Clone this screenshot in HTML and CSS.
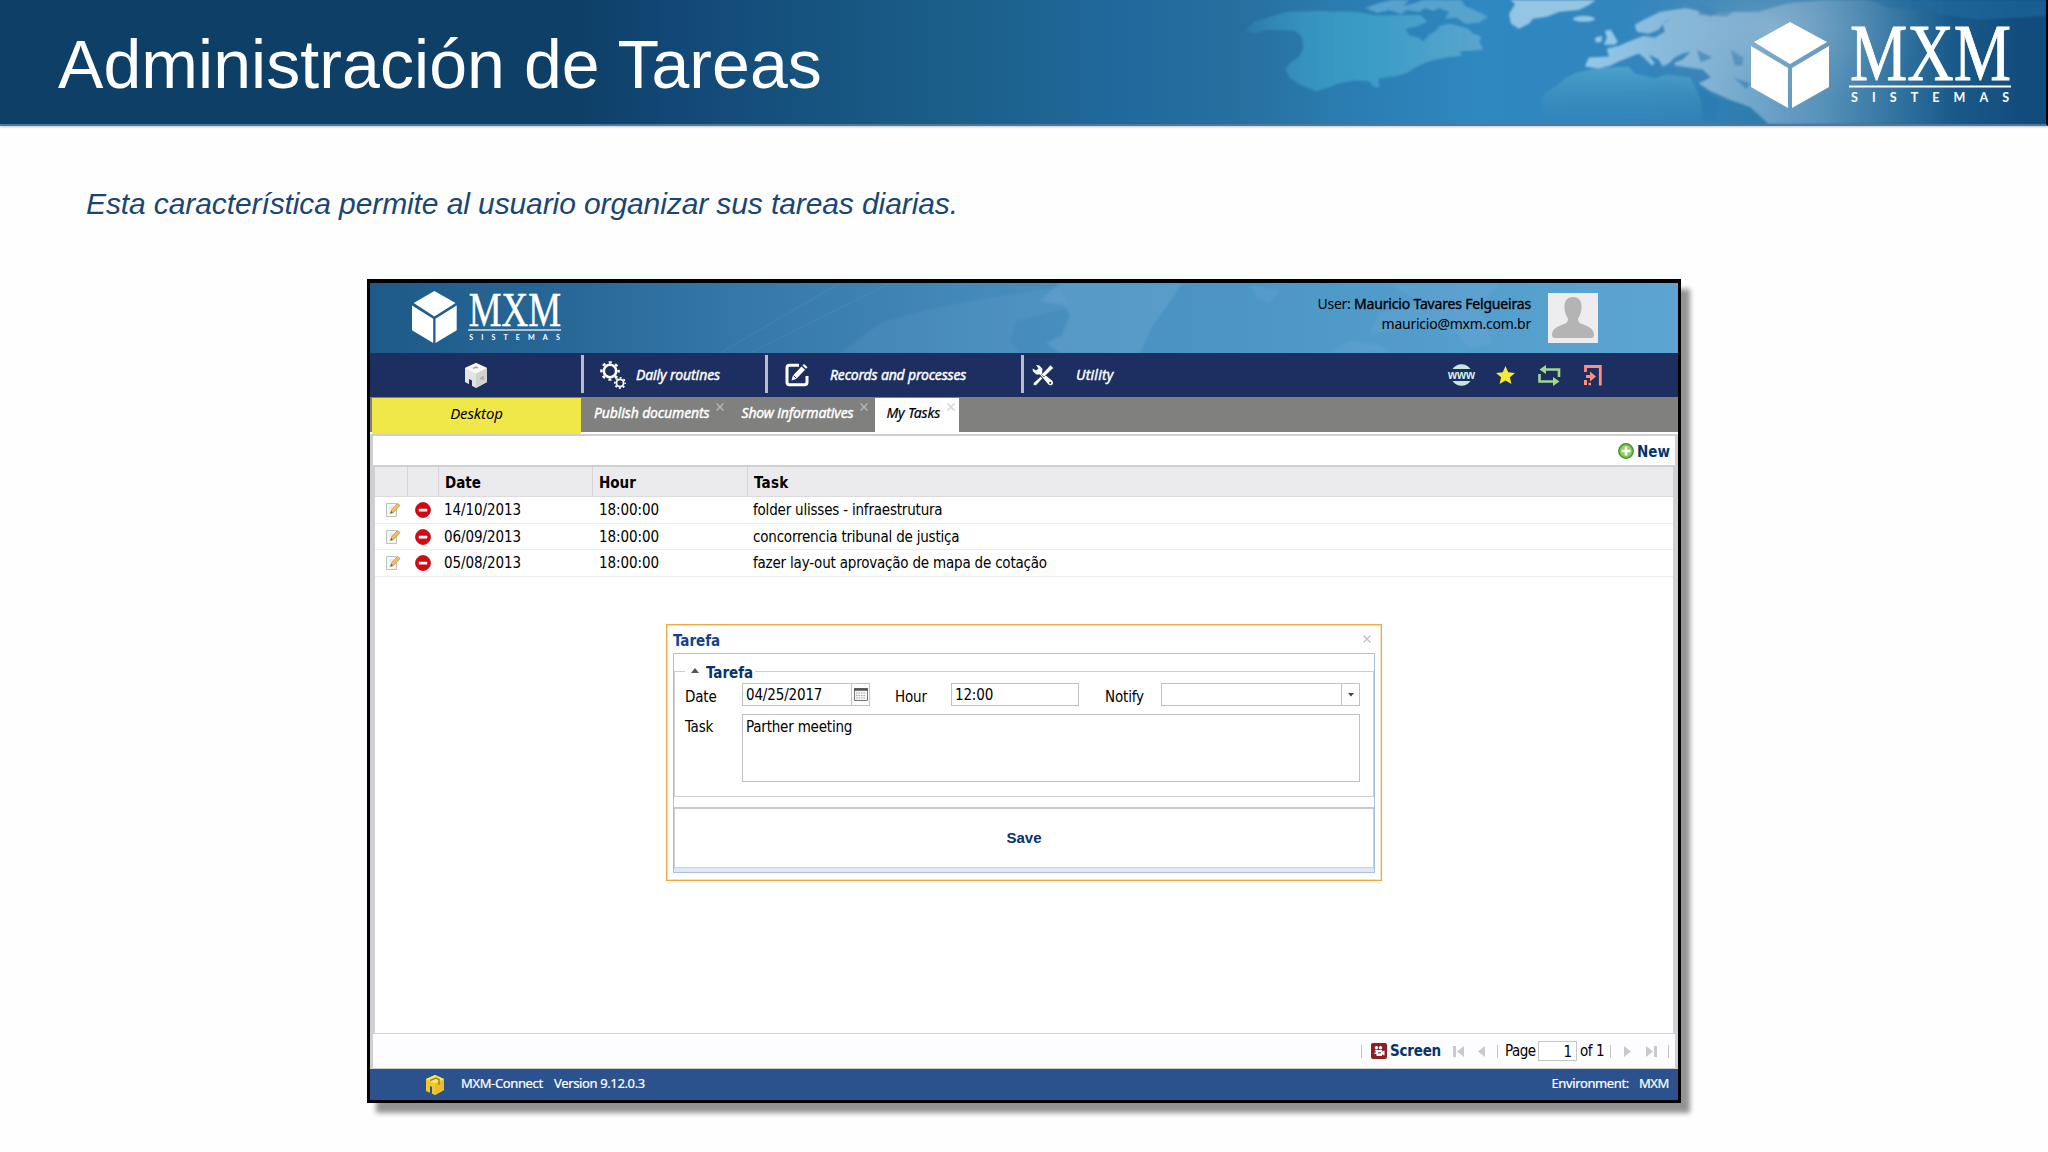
FILE: index.html
```
<!DOCTYPE html>
<html lang="es">
<head>
    <meta charset="UTF-8">
    <meta name="viewport" content="width=device-width, initial-scale=1.0">
    <title>Administración de Tareas</title>
    <link rel="stylesheet" href="styles.css">
</head>
<body>
    <!-- Shared symbols -->
    <svg width="0" height="0" class="defs">
        <symbol id="edit" viewBox="0 0 16 16">
            <path d="M1.5 1.5h10v13h-10z" fill="#f6f8f8" stroke="#b9c1c2"/>
            <path d="M4 5h5M4 7h4M4 11h5" stroke="#dce1e2"/>
            <path d="M5.5 11.5 6.5 8 12.5 1.5 15 3.5 9 10z" fill="#f3c05c" stroke="#b98a3c" stroke-width=".7"/>
            <path d="M5.5 11.5 6.2 9 7.8 10.5z" fill="#555"/>
        </symbol>
        <symbol id="remove" viewBox="0 0 16 16">
            <circle cx="8" cy="8" r="7.5" fill="#d40a10" stroke="#b01318" stroke-width=".8"/>
            <rect x="3.8" y="6.7" width="8.4" height="2.8" rx=".5" fill="#fff"/>
        </symbol>
        <symbol id="close" viewBox="0 0 8 8">
            <path d="M.5.5l7 7M7.5.5l-7 7" fill="none" stroke="currentColor" stroke-width="1.5"/>
        </symbol>
    </svg>

    <header class="slide-header">
        <svg class="map" viewBox="0 0 1048 125" preserveAspectRatio="none">
            <defs>
                <linearGradient id="fade" x1="0" x2="1"><stop offset="0" stop-color="#3a9cc6" stop-opacity=".1"/><stop offset=".3" stop-color="#3a9cc6" stop-opacity=".55"/><stop offset=".6" stop-color="#3f9fc8" stop-opacity=".8"/><stop offset="1" stop-color="#5aa5cf"/></linearGradient>
                <linearGradient id="low" x1="0" x2="0" y1="0" y2="1"><stop offset=".5" stop-color="#2878ad" stop-opacity="0"/><stop offset="1" stop-color="#2878ad" stop-opacity=".8"/></linearGradient>
                <linearGradient id="europe" x1="0" x2="1"><stop offset="0" stop-color="#93c8e8"/><stop offset=".25" stop-color="#8dbcdc" stop-opacity=".9"/><stop offset=".5" stop-color="#7aa8c8" stop-opacity=".6"/><stop offset=".8" stop-color="#5c94b8" stop-opacity="0"/></linearGradient>
                <linearGradient id="africa" x1="0" x2="0" y1="0" y2="1"><stop offset="0" stop-color="#4ba3cb"/><stop offset="1" stop-color="#3583b4" stop-opacity=".2"/></linearGradient>
                <radialGradient id="glow"><stop offset="0" stop-color="#a9c3d8" stop-opacity=".45"/><stop offset="1" stop-color="#7fa9c8" stop-opacity="0"/></radialGradient>
                <filter id="soft" x="-5%" y="-5%" width="110%" height="110%"><feGaussianBlur stdDeviation=".9"/></filter>
            </defs>
            <g filter="url(#soft)">
                <path id="america" fill="url(#fade)" d="M245 31 255 22 268 18 286 12 320 11 357 12 379 16 400 15 421 15 428 22 416 27 406 29 410 36 420 38 424 42 430 35 437 31 441 26 451 24 469 29 474 34 482 37 480 42 484 50 472 51 460 52 463 56 445 58 429 62 418 67 406 74 394 77 379 79 380 88 375 88 370 82 355 81 339 84 330 88 317 92 300 85 290 78 286 70 290 64 300 57 304 48 302 36 295 31 268 30 256 33z"/>
                <use href="#america" fill="url(#low)"/>
                <path fill="#57a3cd" d="M366 8 380 3 392 0H410L404 6 416 3 424 0H462L466 6 480 12 489 17 480 23 466 24 458 18 446 19 450 12 440 8 434 11 426 8 420 12 408 10 402 14 390 10 378 13z"/>
                <path fill="#94c5e4" d="M511 0 516 4 510 14 512 24 520 29 530 24 534 19 548 17 560 12 580 10 590 5 597 0z"/>
                <ellipse cx="585" cy="19" rx="11" ry="3" fill="#94c5e4"/>
                <path fill="#93c8e8" d="M606 31 612 30 615 35 619 42 616 45 605 45 608 38zM596 38 603 36 603 42 597 43z"/>
                <path fill="url(#europe)" d="M638 32 636 25 645 20 661 12 687 8 700 11 712 17 720 12 760 12 790 3 830 0H1048V125H770L752 108 730 100 712 92 700 84 712 78 704 70 690 68 676 66 676 63 684 60 692 52 684 54 676 58 670 64 664 67 660 60 650 55 656 64 653 66 645 58 640 54 630 58 620 62 612 66 600 69 586 67 590 58 610 57 608 49 620 46 632 41 645 36 656 38 666 32 664 24 674 18 666 22 660 30 650 34z"/>
                <path fill="url(#africa)" d="M542 105 546 94 558 86 566 79 578 73 592 70 610 68 630 67 636 74 656 79 668 75 692 78 700 96 716 125H546z"/>
                <path fill="#2a7bb0" opacity=".7" d="M700 4 735 12 728 17 700 15zM698 50 714 58 702 63zM732 50 745 58 744 66 736 66zM735 78 752 84 748 90zM700 88 720 100 716 122H704zM868 41 878 36 876 39z"/>
                <path fill="#1f6a9f" opacity=".6" d="M870 0H1048V16L980 20 930 12 890 8z"/>
            </g>
            <ellipse cx="775" cy="28" rx="150" ry="80" fill="url(#glow)"/>
        </svg>
        <h1>Administración de Tareas</h1>
        <svg class="brand" viewBox="0 0 260 86" preserveAspectRatio="none" fill="#fff">
            <path d="M39 0 76 20 39 42 3 20zM0 24 37 46V86L0 65zM78 24 41 46V86L78 65z"/>
            <text class="mark" x="99" y="58" textLength="161" lengthAdjust="spacingAndGlyphs">MXM</text>
            <rect x="98" y="63.5" width="162" height="2"/>
            <text class="sub" x="100" y="80" textLength="158">SISTEMAS</text>
        </svg>
    </header>

    <p class="intro">Esta característica permite al usuario organizar sus tareas diarias.</p>

    <div class="app">
        <div class="banner">
            <svg class="banner-map" viewBox="0 0 1308 70" preserveAspectRatio="none">
                <g fill="#7db4dc" filter="url(#soft)">
                    <path opacity=".13" d="M470 70 510 40 560 26 600 18 650 10 690 4 700 24 646 38 640 58 650 70z"/>
                    <path opacity=".28" d="M690 0H812L798 22 782 44 770 70H690L676 60 692 52 700 32 694 22 670 18z"/>
                    <path opacity=".18" d="M1020 0H1130L1110 22 1122 60 1100 66 1084 48 1060 42 1000 50 1010 30 1050 20zM880 3 910 8 900 20 888 16zM960 70 980 58 1010 62 1020 70z"/>
                </g>
                <path d="M350 70 470 0M380 70 520 0" stroke="#7db4dc" stroke-opacity=".1" stroke-width="2"/>
            </svg>
            <svg class="banner-logo" viewBox="0 0 260 86" preserveAspectRatio="none" fill="#fff">
                <path d="M39 0 76 20 39 42 3 20zM0 24 37 46V86L0 65zM78 24 41 46V86L78 65z"/>
                <text class="mark" x="99" y="58" textLength="161" lengthAdjust="spacingAndGlyphs">MXM</text>
                <rect x="98" y="63.5" width="162" height="2"/>
                <text class="sub" x="100" y="81" textLength="158">SISTEMAS</text>
            </svg>
            <div class="user">
                <div>User: <b>Mauricio Tavares Felgueiras</b></div>
                <div>mauricio@mxm.com.br</div>
            </div>
            <svg class="avatar" viewBox="0 0 50 50">
                <rect width="50" height="50" fill="#ededef"/>
                <path d="M25 4c6 0 9 4 8.500 11-.5 6-2 8-3.500 10.500 0 3 1 4.500 4 5.500 7 2.500 12 5 12 11 0 2-1 3-3 3H7c-2 0-3-1-3-3 0-6 5-8.500 12-11 3-1 4-2.500 4-5.500C18.500 23 17 21 16.500 15 16 8 19 4 25 4z" fill="#b4b4b4"/>
            </svg>
        </div>

        <nav class="menu">
            <div class="menu-item home">
                <svg width="24" height="27" viewBox="0 0 24 27">
                    <path d="M12 1 23 6V20L12 26 1 20V6z" fill="#e3e3e1"/>
                    <path d="M12 1 23 6 12 11.500 1 6z" fill="#f8f8f6"/>
                    <path d="M12 11.500 23 6V20L12 26z" fill="#d2d2cf"/>
                    <path d="M5 23V17L8 18.500V25z" fill="#1c2f60"/>
                    <path d="M9 6.500 12 5 14 6M16 17l3-2v3" stroke="#aaa9a2" fill="none" stroke-width="1.500"/>
                </svg>
            </div>
            <div class="menu-item routines">
                <svg width="26" height="28" viewBox="0 0 26 28" fill="none" stroke="#fff">
                    <circle cx="10" cy="10" r="6.200" stroke-width="2.600"/>
                    <circle cx="10" cy="10" r="8.600" stroke-width="2.400" stroke-dasharray="3 3.754" stroke-dashoffset="1.500"/>
                    <circle cx="20" cy="22" r="3.600" stroke-width="1.800"/>
                    <circle cx="20" cy="22" r="5.200" stroke-width="1.600" stroke-dasharray="2 2.084" stroke-dashoffset="1"/>
                </svg>
                <span>Daily routines</span>
            </div>
            <div class="menu-item records">
                <svg width="24" height="24" viewBox="0 0 24 24" fill="none" stroke="#fff">
                    <path d="M14 2.200H4.500Q2 2.200 2 4.700V19.300Q2 21.800 4.500 21.800H19.500Q22 21.800 22 19.300V13" stroke-width="3"/>
                    <path d="M6.500 17.500 7.800 12.800 16.500 3.500 20 6.800 11.200 16z" fill="#fff" stroke="none"/>
                    <path d="M17.500 2.400 19 1 22.500 4.200 21 5.800z" fill="#fff" stroke="none"/>
                    <path d="M8.500 12.500 11.500 15.500" stroke="#1c2f60" stroke-width="1"/>
                </svg>
                <span>Records and processes</span>
            </div>
            <div class="menu-item utility">
                <svg width="22" height="22" viewBox="0 0 22 22">
                    <path d="M4 1 7.500 1.500 10.500 5 10 8.500 20 16.500Q22 19 20 21 17.500 22 16 20L8 10.500 4.500 10.500 1 7.500.5 4.500 4 6.500 6.500 4.500z" fill="#fff"/>
                    <circle cx="18.200" cy="18.800" r="1.100" fill="#1c2f60"/>
                    <path d="M18.500 1 21.500 4 12 13 9.500 10.500zM8.500 12.500 10.500 14.500 4 21.500 1 21 1.500 19z" fill="#fff" stroke="#1c2f60" stroke-width=".6"/>
                </svg>
                <span>Utility</span>
            </div>
            <div class="tools">
                <svg class="www" width="29" height="24" viewBox="-1 0 29 24">
                    <path d="M4.500 6A11 11 0 0 1 22.500 6zM4.500 18A11 11 0 0 0 22.500 18z" fill="#c4e9e1"/>
                    <text x="0" y="15.500" textLength="27" lengthAdjust="spacingAndGlyphs" fill="#d5f2ec">www</text>
                </svg>
                <svg class="star" width="19" height="18" viewBox="0 0 19 18"><path d="M9.500 0 12.200 6.200 19 6.900 13.900 11.300 15.400 18 9.500 14.500 3.600 18 5.100 11.300 0 6.900 6.800 6.200z" fill="#f7e83c"/></svg>
                <svg width="23" height="21" viewBox="0 0 23 21">
                    <path d="M6 4.500H21V12M17 16.500H1.500V9" fill="none" stroke="#a5d88b" stroke-width="2.600"/>
                    <path d="M1.500 4.500 8 0V9zM21.500 16.500 15 12V21z" fill="#a5d88b"/>
                </svg>
                <svg width="18" height="21" viewBox="0 0 18 21">
                    <path d="M1.500 7V1.500H16.300V20.500" fill="none" stroke="#ff8d80" stroke-width="2.800"/>
                    <path d="M2 10H6V6.500L12 11.500 6 16.500V13H2zM0 15H3V20H0zM4.500 17.800H7V20.300H4.500z" fill="#ff8d80"/>
                </svg>
            </div>
        </nav>

        <div class="tabs">
            <div class="tab desktop">Desktop</div>
            <div class="tab publish">Publish documents<svg class="x"><use href="#close"/></svg></div>
            <div class="tab show">Show informatives<svg class="x"><use href="#close"/></svg></div>
            <div class="tab active">My Tasks<svg class="x"><use href="#close"/></svg></div>
        </div>

        <main class="panel">
            <div class="toolbar">
                <svg width="16" height="16" viewBox="0 0 16 16">
                    <circle cx="8" cy="8" r="7.300" fill="#6dbd45" stroke="#3f8f2a" stroke-width="1.200"/>
                    <circle cx="8" cy="8" r="5.700" fill="#8fd067"/>
                    <path d="M8 3.500v9M3.500 8h9" stroke="#fff" stroke-width="2.400"/>
                </svg>
                <span>New</span>
            </div>

            <div class="grid">
                <div class="row head">
                    <div class="c-icon"></div><div class="c-icon second"></div>
                    <div class="c-date">Date</div><div class="c-hour">Hour</div><div class="c-task">Task</div>
                </div>
                <div class="row">
                    <div class="c-icon"><svg><use href="#edit"/></svg></div>
                    <div class="c-icon second"><svg><use href="#remove"/></svg></div>
                    <div class="c-date">14/10/2013</div><div class="c-hour">18:00:00</div>
                    <div class="c-task">folder ulisses - infraestrutura</div>
                </div>
                <div class="row">
                    <div class="c-icon"><svg><use href="#edit"/></svg></div>
                    <div class="c-icon second"><svg><use href="#remove"/></svg></div>
                    <div class="c-date">06/09/2013</div><div class="c-hour">18:00:00</div>
                    <div class="c-task">concorrencia tribunal de justiça</div>
                </div>
                <div class="row">
                    <div class="c-icon"><svg><use href="#edit"/></svg></div>
                    <div class="c-icon second"><svg><use href="#remove"/></svg></div>
                    <div class="c-date">05/08/2013</div><div class="c-hour">18:00:00</div>
                    <div class="c-task">fazer lay-out aprovação de mapa de cotação</div>
                </div>
            </div>

            <div class="pager">
                <i class="sep"></i>
                <svg class="rec" width="16" height="16" viewBox="0 0 16 16">
                    <rect width="16" height="16" rx="2" fill="#8c1f24"/>
                    <circle cx="5.500" cy="4.800" r="1.700" fill="#fff"/><circle cx="9.500" cy="4.800" r="1.700" fill="#fff"/>
                    <path d="M4 7h7v1.500l2.500-1v5L11 11.500V13H5.500v-2H3.500V9.500H5z" fill="#fff"/>
                    <path d="M7 9.800h3" stroke="#8c1f24"/>
                </svg>
                <b>Screen</b>
                <svg class="first" width="11" height="11" viewBox="0 0 11 11"><path d="M0 0h3v11H0zM11 0v11L4 5.500z"/></svg>
                <svg class="prev" width="7" height="11" viewBox="0 0 7 11"><path d="M7 0v11L0 5.500z"/></svg>
                <i class="sep"></i>
                <span class="page">Page</span>
                <span class="page-input">1</span>
                <span class="of">of 1</span>
                <i class="sep"></i>
                <svg class="next" width="7" height="11" viewBox="0 0 7 11"><path d="M0 0v11L7 5.500z"/></svg>
                <svg class="last" width="11" height="11" viewBox="0 0 11 11"><path d="M8 0h3v11H8zM0 0v11L7 5.500z"/></svg>
                <i class="sep"></i>
            </div>

            <div class="dialog">
                <div class="dialog-title">Tarefa<svg class="x"><use href="#close"/></svg></div>
                <div class="dialog-body">
                    <div class="form-area">
                        <fieldset>
                            <legend><svg width="8" height="5" viewBox="0 0 8 5"><path d="M4 0 8 5H0z" fill="#555"/></svg>Tarefa</legend>
                            <div class="fields">
                                <label class="l-date">Date</label>
                                <div class="input date">04/25/2017
                                    <span class="trigger"><svg width="14" height="13" viewBox="0 0 14 13"><path d="M.5.500h13v12H.5z" fill="#f4f4f6" stroke="#777"/><path d="M0 1.500h14" stroke="#555" stroke-width="2.500"/><path d="M2 5h10M2 7.500h10M2 10h10" stroke="#aaa" stroke-dasharray="1.500 1"/></svg></span>
                                </div>
                                <label class="l-hour">Hour</label>
                                <div class="input hour">12:00</div>
                                <label class="l-notify">Notify</label>
                                <div class="input notify"><span class="trigger"><svg width="6" height="4" viewBox="0 0 6 4"><path d="M0 0h6L3 3.500z" fill="#444"/></svg></span></div>
                            </div>
                            <div class="fields">
                                <label class="l-date">Task</label>
                                <div class="input area">Parther meeting</div>
                            </div>
                        </fieldset>
                    </div>
                    <div class="save">Save</div>
                </div>
            </div>
        </main>

        <footer class="status">
            <svg width="18" height="20" viewBox="0 0 18 20">
                <path d="M9 0 18 4V15L9 20 0 16V4z" fill="#f0c92e"/>
                <path d="M9 0 18 4 9 8.500 0 4z" fill="#fbe566"/>
                <path d="M9 8.500 18 4V15L9 20z" fill="#e8c02a"/>
                <path d="M4 5.500 10 3 13 4.500V10" stroke="#a98412" stroke-width="1.500" fill="none"/>
                <path d="M4 18V11L6 12V19z" fill="#2c528d"/>
            </svg>
            <span class="product">MXM-Connect</span>
            <span class="version">Version 9.12.0.3</span>
            <span class="env">Environment:</span>
            <span class="env-name">MXM</span>
        </footer>
    </div>
</body>
</html>
```
FILE: styles.css
```
* {
    box-sizing: border-box;
}
body {
    margin: 0;
    height: 1152px;
    overflow: hidden;
    background: #fefefe;
    font-family: "DejaVu Sans Condensed", "DejaVu Sans", sans-serif;
    font-size: 15px;
    color: #000;
}
svg {
    flex: none;
    display: block;
}
.defs {
    position: absolute;
}

/* Slide header */
.slide-header {
    position: relative;
    height: 126px;
    display: flex;
    justify-content: space-between;
    align-items: flex-start;
    padding: 0 35px 0 58px;
    background: linear-gradient(90deg, #0e4067 0, #0e4067 580px, #124878 680px, #17547f 820px, #1c628e 1000px, #21699d 1120px, #276f9f 1240px, #2a7cb0 1340px, #2f88c0 1480px, #3285bd 1640px, #2d79aa 1800px, #1f6595 1900px, #124c7c 2020px);
    border-bottom: 2px solid #52789a;
    border-right: 2px solid #000;
    box-shadow: 0 1px 2px #b9c8d6;
}
.map {
    position: absolute;
    left: 1000px;
    top: 0;
    width: 1046px;
    height: 124px;
}
.slide-header h1 {
    margin: 26px 0 0;
    font: 68px/76px "Liberation Sans", Arial, sans-serif;
    letter-spacing: 0.07px;
    color: #fff;
}
.brand {
    position: relative;
    width: 260px;
    height: 86px;
    margin-top: 22px;
}
.mark {
    font: 80px "Liberation Serif", serif;
    stroke: #fff;
    stroke-width: 0.8px;
}
.sub {
    font: bold 12.5px Lato, sans-serif;
}
.intro {
    margin: 61px 0 58px 86px;
    font: italic 30px/34px "Liberation Sans", Arial, sans-serif;
    letter-spacing: -0.1px;
    color: #1a4673;
}

/* Application window */
.app {
    width: 1314px;
    height: 824px;
    margin-left: 367px;
    border: 3px solid #000;
    border-top-width: 4px;
    display: flex;
    flex-direction: column;
    box-shadow: 9px 10px 5px rgba(0, 0, 0, 0.42);
}
.banner {
    position: relative;
    height: 70px;
    display: flex;
    align-items: flex-start;
    padding-right: 80px;
    background: linear-gradient(90deg, #1e5a88, #276898 15%, #3577a9 28%, #468dbd 50%, #4d98c7 70%, #5ca5d3);
}
.banner-map {
    position: absolute;
    left: 0;
    top: 0;
    width: 1308px;
    height: 70px;
}
.banner-logo {
    position: relative;
    width: 149px;
    height: 52px;
    margin: 8px auto 0 42px;
}
.user {
    position: relative;
    margin: 11px 17px 0 0;
    text-align: right;
    font: 14px/20px "Noto Sans", sans-serif;
    letter-spacing: -0.25px;
}
.user b {
    font-weight: 400;
    letter-spacing: -0.18px;
    -webkit-text-stroke: 0.35px #000;
}
.avatar {
    position: relative;
    width: 50px;
    height: 50px;
    margin-top: 10px;
}

/* Menu */
.menu {
    height: 44px;
    display: flex;
    background: #1d2f60;
    color: #fff;
    font: italic 14px/43px "Noto Sans", sans-serif;
    letter-spacing: -0.1px;
    -webkit-text-stroke: 0.4px currentColor;
    white-space: nowrap;
}
.menu-item {
    display: flex;
    position: relative;
}
.menu-item svg {
    margin-top: 9px;
}
.menu-item + .menu-item::before {
    content: "";
    width: 3px;
    height: 38px;
    margin-top: 2px;
    background: #b9bdcb;
}
.home {
    width: 211px;
    justify-content: center;
}
.routines {
    width: 184px;
}
.routines svg {
    margin: 8px 10px 0 16px;
}
.records {
    width: 256px;
    letter-spacing: -0.18px;
}
.records svg {
    margin: 10px 21px 0 17px;
}
.utility {
    letter-spacing: 0.2px;
}
.utility svg {
    margin: 11px 22px 0 8px;
}
.tools {
    display: flex;
    align-items: center;
    margin-left: auto;
    padding-right: 76px;
    -webkit-text-stroke: 0;
}
.tools svg + svg {
    margin-left: 23px;
}
.tools .star {
    margin-left: 20px;
}
.www text {
    font: bold 12px "Liberation Sans", Arial, sans-serif;
    letter-spacing: 0;
}

/* Tabs */
.tabs {
    height: 35px;
    display: flex;
    background: #80807f;
    font: italic 14px/31px "Noto Sans", sans-serif;
    letter-spacing: -0.13px;
    -webkit-text-stroke: 0.4px currentColor;
    color: #fff;
    padding-left: 2px;
    white-space: nowrap;
}
.tab {
    display: flex;
    margin-top: 1px;
    line-height: 30px;
}
.x {
    width: 8px;
    height: 8px;
    margin: 5px 0 0 7px;
    color: #b5b5b5;
}
.desktop {
    width: 209px;
    height: 36px;
    justify-content: center;
    background: #f0e848;
    color: #000;
    font-size: 15px;
    -webkit-text-stroke: 0;
}
.publish {
    margin-left: 13px;
}
.show {
    margin-left: 17px;
}
.active {
    width: 84px;
    height: 35px;
    margin-left: 7px;
    padding-left: 11px;
    background: #fff;
    color: #000;
    -webkit-text-stroke: 0.2px #000;
}
.active .x {
    color: #d5d5d5;
}

/* Panel */
.panel {
    position: relative;
    flex: 1;
    display: flex;
    flex-direction: column;
    margin-top: 2px;
    border: solid #cfcfd3;
    border-width: 2px 3px 1px;
    background: #fff;
}
.toolbar {
    height: 29px;
    display: flex;
    align-items: center;
    justify-content: flex-end;
    gap: 3px;
    padding-right: 5px;
    font-weight: bold;
    color: #04346c;
}
.toolbar span {
    padding-top: 2px;
}
.grid {
    flex: 1;
    border: solid #d0d0d4;
    border-width: 2px 2px 1px;
    line-height: 26px;
}
.row {
    display: flex;
    height: 26.600px;
    border-bottom: 1px solid #ececee;
    letter-spacing: -0.08px;
}
.row.head {
    height: 30px;
    background: #ebebed;
    border-color: #dcdcde;
    font-weight: bold;
    line-height: 33px;
    letter-spacing: 0;
}
.head div {
    border-right: 1px solid #d4d4d6;
}
.c-icon {
    width: 33px;
    padding-left: 10px;
}
.c-icon svg {
    width: 16px;
    height: 16px;
    margin-top: 5px;
}
.c-icon.second {
    width: 31px;
    padding-left: 7px;
}
.c-date,
.c-hour {
    width: 154px;
    padding-left: 5px;
}
.c-hour {
    width: 155px;
    padding-left: 6px;
}
.head .c-date,
.head .c-hour {
    padding-left: 6px;
}
.c-task {
    flex: 1;
    padding-left: 5px;
    letter-spacing: -0.2px;
}
.head .c-task {
    padding-left: 6px;
    letter-spacing: 0.3px;
    border: none;
}

/* Pager */
.pager {
    height: 34px;
    display: flex;
    align-items: center;
    justify-content: flex-end;
    padding-right: 6px;
    background: #fdfcfe;
    fill: #c9c9cd;
}
.sep {
    width: 1px;
    height: 13px;
    background: #c4c4c8;
}
.rec {
    margin: 0 3px 0 9px;
}
.pager b {
    width: 50px;
    letter-spacing: -0.22px;
    color: #04346c;
}
.first {
    margin-left: 13px;
}
.prev {
    margin: 0 12px 0 14px;
}
.page {
    width: 33px;
    margin-left: 7px;
    letter-spacing: -0.5px;
}
.page-input {
    width: 39px;
    height: 20px;
    border: 1px solid #c6c6ca;
    background: #fff;
    padding-right: 4px;
    text-align: right;
    line-height: 20px;
}
.of {
    width: 30px;
    margin-left: 3px;
    letter-spacing: -0.4px;
}
.next {
    margin: 0 15px 0 13px;
}
.last {
    margin-right: 11px;
}

/* Task dialog */
.dialog {
    position: absolute;
    left: 293px;
    top: 188px;
    width: 716px;
    height: 257px;
    border: 1px solid #efa843;
    box-shadow: inset 0 0 0 1px #fbdfb8;
    background: #fff;
    padding: 0 6px;
}
.dialog-title {
    height: 28px;
    display: flex;
    justify-content: space-between;
    font-weight: bold;
    line-height: 33px;
    color: #15428b;
}
.dialog-title .x {
    margin: 10px 4px 0 0;
    color: #c6c3cb;
}
.dialog-body {
    height: 220px;
    border: 1px solid #a9c0e2;
    background: #dfe8f6;
}
.form-area {
    height: 153px;
    padding-top: 7px;
    background: #fff;
}
fieldset {
    height: 136px;
    margin: 0;
    padding: 0;
    border: 1px solid #cdcdd1;
}
legend {
    display: flex;
    align-items: center;
    gap: 7px;
    margin-left: 10px;
    padding: 4px 2px 0 6px;
    font-weight: bold;
    line-height: 16px;
    color: #04346c;
}
legend svg {
    margin-bottom: 5px;
}
.fields {
    display: flex;
    padding-top: 2px;
    padding-left: 10px;
    letter-spacing: -0.15px;
}
.fields + .fields {
    padding-top: 5px;
}
.fields label {
    width: 57px;
    line-height: 28px;
    height: 26px;
}
.fields + .fields label {
    line-height: 26px;
}
.fields .l-hour {
    width: 56px;
    margin-left: 25px;
}
.fields .l-notify {
    width: 56px;
    margin-left: 26px;
}
.input {
    display: flex;
    justify-content: space-between;
    width: 128px;
    height: 23px;
    padding-left: 3px;
    border: 1px solid #c2c2c6;
    line-height: 23px;
    background: #fff;
}
.trigger {
    width: 18px;
    height: 21px;
    display: flex;
    align-items: center;
    justify-content: center;
    border-left: 1px solid #c2c2c6;
}
.notify {
    width: 199px;
    justify-content: flex-end;
}
.area {
    width: 618px;
    height: 68px;
    line-height: 24px;
    letter-spacing: -0.2px;
}
.save {
    height: 61px;
    border: 1px solid #cdcdd1;
    border-top: 2px solid #c8c8cc;
    background: #fff;
    text-align: center;
    font: bold 15px/58px "Liberation Sans", Arial, sans-serif;
    color: #04346c;
}

/* Status bar */
.status {
    height: 31px;
    display: flex;
    padding: 0 9px 0 56px;
    background: #2c528d;
    color: #fff;
    font: 13px/29px "Noto Sans", sans-serif;
    letter-spacing: -0.37px;
    -webkit-text-stroke: 0.2px #fff;
}
.status svg {
    margin-top: 6px;
}
.product {
    width: 93px;
    margin-left: 17px;
}
.env {
    margin-left: auto;
    margin-right: 10px;
}
```
